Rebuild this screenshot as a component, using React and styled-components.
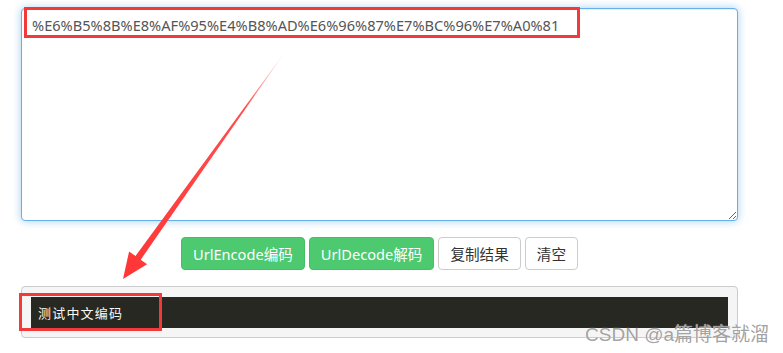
import React from "react";
import styled, { createGlobalStyle } from "styled-components";

const Global = createGlobalStyle`
  html, body { margin: 0; padding: 0; background: #fff; }
  body { font-family: "Noto Sans", "Noto Sans CJK SC", sans-serif; }
`;

const Page = styled.div`
  position: relative;
  width: 783px;
  height: 353px;
  overflow: hidden;
  padding: 8px 45px 0 21px;
  box-sizing: border-box;
  display: flex;
  flex-direction: column;
  gap: 16px;
`;

const TextArea = styled.textarea`
  display: block;
  box-sizing: border-box;
  width: 717px;
  height: 213px;
  margin: 0;
  padding: 6px 10px;
  border: 1px solid #66afe9;
  border-radius: 4px;
  outline: none;
  box-shadow: inset 0 1px 1px rgba(0, 0, 0, 0.075), 0 0 8px rgba(102, 175, 233, 0.6);
  font-family: "Noto Sans", "Noto Sans CJK SC", sans-serif;
  font-size: 14.6px;
  line-height: 20px;
  color: #555;
  resize: vertical;
`;

const ButtonRow = styled.div`
  display: flex;
  justify-content: center;
  gap: 4px;
`;

const Button = styled.button`
  height: 33px;
  box-sizing: border-box;
  padding: 0 11px;
  border-radius: 4px;
  font-family: "Noto Sans", "Noto Sans CJK SC", sans-serif;
  font-size: 14.6px;
  border: 1px solid ${(p) => (p.$green ? "#47be66" : "#ccc")};
  background: ${(p) => (p.$green ? "#4dc96f" : "#fff")};
  color: ${(p) => (p.$green ? "#fff" : "#333")};
  cursor: pointer;
`;

const ResultPanel = styled.div`
  box-sizing: border-box;
  width: 717px;
  height: 52px;
  background: #f5f5f5;
  border: 1px solid #ccc;
  border-radius: 4px;
  padding: 10px 9px 9px 9px;
`;

const ResultBar = styled.div`
  height: 31px;
  background: #272822;
  color: #f8f8f2;
  display: flex;
  align-items: center;
  padding-left: 7px;
  font-family: "Noto Sans CJK SC", sans-serif;
  font-size: 13px;
  letter-spacing: 1.2px;
`;

const RedBox = styled.div`
  position: absolute;
  box-sizing: border-box;
  border: 3px solid #f23a3a;
  pointer-events: none;
`;

const Watermark = styled.div`
  position: absolute;
  right: 14px;
  bottom: 7px;
  font-family: "Liberation Sans", "Noto Sans CJK SC", sans-serif;
  font-size: 19px;
  color: rgba(150, 150, 150, 0.9);
  text-shadow: 0 0 1px #fff;
  pointer-events: none;
`;

const Overlay = styled.svg`
  position: absolute;
  left: 0;
  top: 0;
  pointer-events: none;
`;

function Arrow() {
  const sx = 285, sy = 52, tx = 123, ty = 279;
  const dx = tx - sx, dy = ty - sy;
  const len = Math.hypot(dx, dy);
  const ux = dx / len, uy = dy / len;
  const px = -uy, py = ux;
  const headLen = 26, headHalf = 11, shaftHalf = 3.2;
  const bx = tx - ux * headLen, by = ty - uy * headLen;
  const pts = [
    [sx, sy],
    [bx + px * shaftHalf, by + py * shaftHalf],
    [bx + px * headHalf, by + py * headHalf],
    [tx, ty],
    [bx - px * headHalf, by - py * headHalf],
    [bx - px * shaftHalf, by - py * shaftHalf],
  ]
    .map((p) => p.map((v) => v.toFixed(1)).join(","))
    .join(" ");
  return (
    <Overlay width="783" height="353" viewBox="0 0 783 353">
      <defs>
        <linearGradient id="ag" gradientUnits="userSpaceOnUse" x1={sx} y1={sy} x2={tx} y2={ty}>
          <stop offset="0" stopColor="#ff3b3b" stopOpacity="0.1" />
          <stop offset="0.25" stopColor="#ff3b3b" stopOpacity="0.9" />
          <stop offset="1" stopColor="#ff3535" stopOpacity="1" />
        </linearGradient>
      </defs>
      <polygon points={pts} fill="url(#ag)" />
    </Overlay>
  );
}

export default function App() {
  return (
    <>
      <Global />
      <Page>
        <TextArea defaultValue="%E6%B5%8B%E8%AF%95%E4%B8%AD%E6%96%87%E7%BC%96%E7%A0%81" />
        <ButtonRow>
          <Button $green>UrlEncode编码</Button>
          <Button $green>UrlDecode解码</Button>
          <Button>复制结果</Button>
          <Button>清空</Button>
        </ButtonRow>
        <ResultPanel>
          <ResultBar>测试中文编码</ResultBar>
        </ResultPanel>
        <RedBox style={{ left: 24, top: 7, width: 556, height: 31 }} />
        <RedBox style={{ left: 19, top: 293, width: 143, height: 38 }} />
        <Arrow />
        <Watermark>CSDN @a篇博客就溜</Watermark>
      </Page>
    </>
  );
}
